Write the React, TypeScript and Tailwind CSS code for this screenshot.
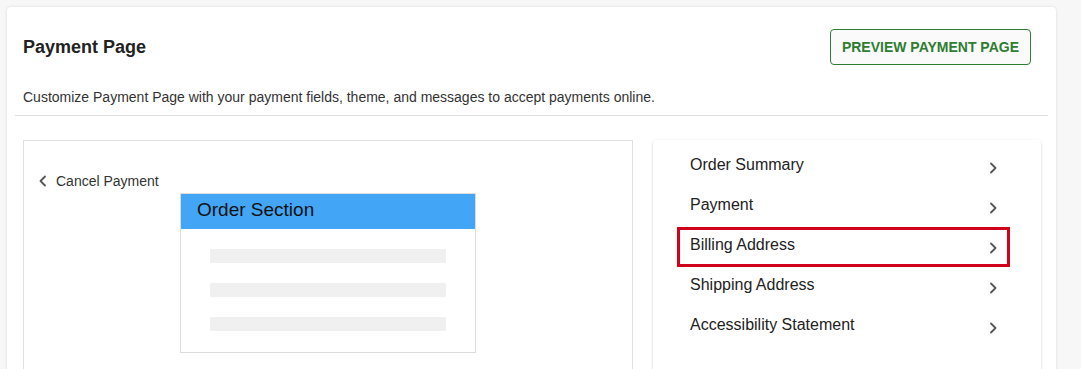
import React from "react";

const Chevron = ({ dir = "right" }: { dir?: "left" | "right" }) => (
  <svg width="8" height="12" viewBox="0 0 8 12" fill="none" className="shrink-0">
    <path
      d={dir === "right" ? "M2 1.5 L6.5 6 L2 10.5" : "M6 1.5 L1.5 6 L6 10.5"}
      stroke="#555"
      strokeWidth="1.8"
      strokeLinecap="round"
      strokeLinejoin="round"
    />
  </svg>
);

const items = ["Order Summary", "Payment", "Billing Address", "Shipping Address", "Accessibility Statement"];

export default function App() {
  return (
    <div
      className="h-[369px] w-[1081px] overflow-hidden bg-[#f7f7f7] pt-[7px] pl-[7px]"
      style={{ fontFamily: '"Liberation Sans", Arial, sans-serif' }}
    >
      <div className="w-[1049px] h-[400px] rounded-[4px] bg-white shadow-[0_0_3px_rgba(0,0,0,0.12)] px-[8px] pt-[22px]">
        <div className="flex items-center justify-between pl-[8px] pr-[17px]">
          <h1 className="text-[18px] leading-[22px] font-bold text-[#222]">Payment Page</h1>
          <button className="h-[36px] rounded-[4px] border border-[#2e7d32] bg-[#fafafa] px-[11px] text-[14px] font-bold text-[#2e7d32]">
            PREVIEW PAYMENT PAGE
          </button>
        </div>
        <div className="border-b border-[#dedede] pl-[8px] pt-[22px] pb-[8px]">
          <p className="text-[14px] leading-[20px] text-[#333]">
            Customize Payment Page with your payment fields, theme, and messages to accept payments online.
          </p>
        </div>
        <div className="mt-[24px] flex gap-[20px] pl-[8px]">
          <div className="w-[610px] h-[260px] border border-[#e0e0e0] pt-[30px]">
            <div className="flex items-center gap-[9px] pl-[15px] h-[20px]">
              <Chevron dir="left" />
              <span className="text-[14px] leading-[20px] text-[#333]">Cancel Payment</span>
            </div>
            <div className="mx-auto mt-[2px] w-[296px] h-[160px] border border-[#dcdcdc]">
              <div className="h-[35px] bg-[#42a5f5] pl-[16px] flex items-center">
                <span className="text-[19px] leading-[22px] text-[#111] mb-[3px]">Order Section</span>
              </div>
              <div className="flex flex-col gap-[20px] pt-[20px] pl-[29px]">
                <div className="h-[14px] w-[236px] bg-[#f0f0f0]" />
                <div className="h-[14px] w-[236px] bg-[#f0f0f0]" />
                <div className="h-[14px] w-[236px] bg-[#f0f0f0]" />
              </div>
            </div>
          </div>
          <div className="w-[388px] h-[260px] rounded-[4px] bg-white shadow-[0_1px_3px_rgba(0,0,0,0.18)] pt-[7px] pl-[24px]">
            {items.map((it) => (
              <div
                key={it}
                className={`flex h-[40px] w-[333px] items-center justify-between border-[3px] pl-[10px] pr-[10px] ${
                  it === "Billing Address" ? "border-[#d0021b]" : "border-transparent"
                }`}
              >
                <span className="text-[16px] leading-[20px] text-[#222] mb-[5px]">{it}</span>
                <span className="mt-[2px]">
                  <Chevron />
                </span>
              </div>
            ))}
          </div>
        </div>
      </div>
    </div>
  );
}
